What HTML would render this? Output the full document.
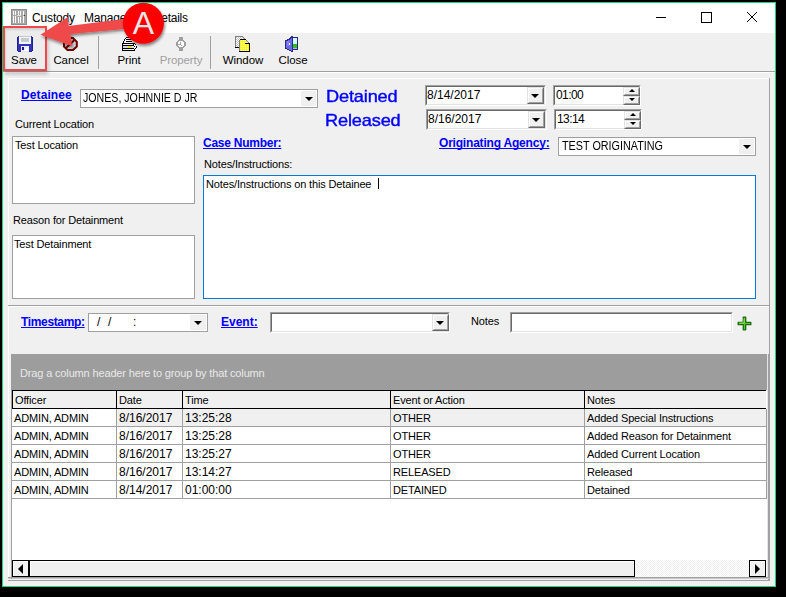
<!DOCTYPE html>
<html><head><meta charset="utf-8">
<style>
*{box-sizing:border-box;margin:0;padding:0}
html,body{width:786px;height:597px;overflow:hidden;background:#000}
body{position:relative;font-family:"Liberation Sans",sans-serif;font-size:11px;color:#000}
.a{position:absolute}
.t{position:absolute;white-space:pre;line-height:1;font-size:11px;letter-spacing:-0.15px}
.lnk{color:#0000ff;font-weight:bold;text-decoration:underline;text-decoration-skip-ink:none;letter-spacing:0}
.tb{font-size:11.5px;letter-spacing:-0.1px}
.box{position:absolute;background:#fff;border:1px solid #a0a0a0}
.sunk{position:absolute;background:#fff;border-top:1px solid #a0a0a0;border-left:1px solid #a0a0a0;border-right:1px solid #fff;border-bottom:1px solid #fff}
.sunk:before{content:"";position:absolute;left:0;top:0;right:0;bottom:0;border-top:1px solid #696969;border-left:1px solid #696969;border-right:1px solid #e3e3e3;border-bottom:1px solid #e3e3e3}
.btn3{position:absolute;background:#f0f0f0;border-top:1px solid #e3e3e3;border-left:1px solid #e3e3e3;border-right:1px solid #696969;border-bottom:1px solid #696969}
.btn3:before{content:"";position:absolute;left:0;top:0;right:0;bottom:0;border-top:1px solid #fff;border-left:1px solid #fff;border-right:1px solid #a0a0a0;border-bottom:1px solid #a0a0a0}
.tri{position:absolute;width:0;height:0;border-left:4px solid transparent;border-right:4px solid transparent;border-top:4px solid #000}
.triu{position:absolute;width:0;height:0;border-left:4px solid transparent;border-right:4px solid transparent;border-bottom:4px solid #000}
.tri.sm{border-left-width:3px;border-right-width:3px;border-top-width:3px}.triu.sm{border-left-width:3px;border-right-width:3px;border-bottom-width:3px}
.gl{position:absolute;background:#a0a0a0}
.wl{position:absolute;background:#fff}
.row{position:absolute;left:12px;width:755px;height:18px}
.cell{position:absolute;top:0;height:18px;border-right:1px solid #a0a0a0;border-bottom:1px solid #a0a0a0;background:#fff}
.cell span{position:absolute;left:1px;top:4px;white-space:pre;line-height:1;letter-spacing:-0.15px}
</style></head><body>
<!-- window -->
<div class="a" style="left:2px;top:2px;width:774px;height:585px;background:#f0f0f0;border:1px solid #1ed37c"></div>
<div class="a" style="left:3px;top:3px;width:772px;height:30px;background:#fff"></div>

<!-- title icon -->
<svg class="a" style="left:11px;top:9px" width="16" height="16" viewBox="0 0 16 16" shape-rendering="crispEdges">
<rect x="0" y="0" width="16" height="16" fill="#8c8c8c"/>
<rect x="1" y="1" width="14" height="14" fill="#a8a8a8"/>
<g fill="#fff"><rect x="2" y="2" width="1" height="4"/><rect x="4" y="2" width="1" height="4"/><rect x="7" y="2" width="1" height="4"/><rect x="9" y="2" width="1" height="4"/><rect x="12" y="2" width="1" height="4"/>
<rect x="2" y="7" width="1" height="7"/><rect x="4" y="7" width="1" height="7"/><rect x="7" y="8" width="1" height="6"/><rect x="9" y="8" width="1" height="6"/><rect x="12" y="7" width="1" height="7"/></g>
<rect x="6" y="6" width="4" height="1" fill="#e0e0e0"/>
<rect x="13" y="6" width="1" height="1" fill="#303030"/>
</svg>
<div class="t" style="left:32px;top:12px;font-size:12px;color:#000">Custody</div><div class="t" style="left:84px;top:12px;font-size:12px;letter-spacing:-0.2px;color:#000">Management</div><div class="t" style="left:153px;top:12px;font-size:12px;letter-spacing:-0.3px;color:#000">Details</div>

<!-- title buttons -->
<div class="a" style="left:656px;top:17px;width:10px;height:1px;background:#000"></div>
<div class="a" style="left:701px;top:12px;width:11px;height:11px;border:1px solid #000"></div>
<svg class="a" style="left:746px;top:11px" width="12" height="12" viewBox="0 0 12 12"><path d="M1 1L11 11M11 1L1 11" stroke="#000" stroke-width="1"/></svg>

<!-- toolbar -->
<div class="gl" style="left:3px;top:71px;width:772px;height:1px"></div>
<div class="wl" style="left:3px;top:72px;width:772px;height:1px"></div>
<div class="gl" style="left:98px;top:36px;width:1px;height:33px"></div>
<div class="gl" style="left:210px;top:36px;width:1px;height:33px"></div>

<!-- save pressed button -->
<div class="a" style="left:5px;top:28px;width:40px;height:41px;background:#ececec;box-shadow:inset 1px 2px 2px #d0d0d0"></div>
<svg class="a" style="left:17px;top:36px" width="16" height="16" viewBox="0 0 16 16" shape-rendering="crispEdges">
<path d="M1 0H15V1H16V15H15V16H1V15H0V1H1Z" fill="#3434b8"/>
<rect x="0" y="1" width="1" height="14" fill="#20209a"/><rect x="15" y="1" width="1" height="14" fill="#20209a"/><rect x="1" y="15" width="14" height="1" fill="#20209a"/>
<rect x="2" y="0" width="12" height="8" fill="#f4f4ff"/>
<rect x="2" y="0" width="12" height="1" fill="#c8c8d8"/>
<rect x="4" y="2" width="8" height="4" fill="#c4cccc"/>
<rect x="4" y="10" width="8" height="6" fill="#e8e8f0"/>
<rect x="5" y="11" width="2" height="3" fill="#1a1a90"/>
<path d="M7 15L10 11H11V15Z" fill="#ffffff"/>
</svg>
<div class="t tb" style="left:0px;width:48px;text-align:center;top:55px">Save</div>

<svg class="a" style="left:63px;top:37px" width="15" height="14" viewBox="0 0 15 14">
<path d="M4.5 1H10L13.8 4.8V9.5L10 13H4.5L1 9.5V4.8Z" fill="#d4d4d4" stroke="#6e0000" stroke-width="2" stroke-linejoin="miter"/>
<path d="M3 11L12 2.5" stroke="#6e0000" stroke-width="2"/>
</svg>
<div class="t tb" style="left:46px;width:50px;text-align:center;top:55px">Cancel</div>

<svg class="a" style="left:121px;top:37px" width="16" height="15" viewBox="0 0 16 15" shape-rendering="crispEdges">
<path d="M5 0H8V1H5Z" fill="#000"/>
<path d="M4 1H5V2H4ZM3 2H4V4H3ZM2 4H3V6H2Z" fill="#000"/>
<rect x="5" y="1" width="5" height="1" fill="#fff"/>
<rect x="4" y="2" width="7" height="4" fill="#fff"/>
<rect x="5" y="2" width="5" height="1" fill="#000"/>
<rect x="5" y="4" width="6" height="1" fill="#000"/>
<rect x="1" y="6" width="13" height="1" fill="#000"/>
<rect x="1" y="7" width="1" height="7" fill="#000"/>
<rect x="2" y="7" width="10" height="1" fill="#f0f0f0"/>
<rect x="2" y="8" width="11" height="1" fill="#000"/>
<rect x="2" y="9" width="11" height="2" fill="#d8d8e0"/>
<rect x="7" y="9" width="3" height="2" fill="#e8e800"/>
<rect x="2" y="11" width="11" height="1" fill="#000"/>
<rect x="3" y="12" width="9" height="1" fill="#f0f0f0"/>
<rect x="2" y="13" width="11" height="1" fill="#000"/>
<path d="M12 7H13V8H12ZM14 7H15V8H14ZM13 9H14V10H13ZM15 9H16V11H15ZM12 11H13V12H12ZM14 11H15V12H14ZM13 12H14V14H13Z" fill="#000"/>
</svg>
<div class="t tb" style="left:104px;width:50px;text-align:center;top:55px">Print</div>

<svg class="a" style="left:176px;top:37px" width="11" height="14" viewBox="0 0 11 14" shape-rendering="crispEdges">
<rect x="3" y="0" width="4" height="3" fill="#a0a0a0"/>
<rect x="3" y="11" width="4" height="3" fill="#a0a0a0"/>
<path d="M2 3H8V4H9V10H8V11H2V10H1V9H0V5H1V4H2Z" fill="#a0a0a0"/>
<rect x="9" y="5" width="1" height="4" fill="#a0a0a0"/>
<path d="M2 5H3V4H7V5H8V9H7V10H3V9H2Z" fill="#fff"/>
<rect x="4" y="5" width="1" height="3" fill="#a0a0a0"/><rect x="2" y="7" width="3" height="1" fill="#a0a0a0"/><rect x="5" y="8" width="1" height="1" fill="#a0a0a0"/>
</svg>
<div class="t tb" style="left:151px;width:60px;text-align:center;top:55px;color:#a0a0a0">Property</div>

<svg class="a" style="left:235px;top:36px" width="16" height="16" viewBox="0 0 16 16" shape-rendering="crispEdges">
<defs><pattern id="dg" width="2" height="2" patternUnits="userSpaceOnUse"><rect width="2" height="2" fill="#fff"/><rect width="1" height="1" fill="#c0c0c0"/><rect x="1" y="1" width="1" height="1" fill="#c0c0c0"/></pattern>
<pattern id="dy" width="2" height="2" patternUnits="userSpaceOnUse"><rect width="2" height="2" fill="#ffff00"/><rect width="1" height="1" fill="#fff"/></pattern></defs>
<path d="M0 0H7L10 3V12H0Z" fill="url(#dg)"/>
<rect x="0" y="0" width="1" height="11" fill="#808080"/><rect x="1" y="0" width="6" height="1" fill="#808080"/>
<rect x="0" y="11" width="5" height="1" fill="#000"/>
<path d="M7 1H8V2H9V3H10V4H11V5H12V6H13V7H14V6H13V5H12V4H11V3H10V2H9V1H8V0H7Z" fill="#808080"/>
<path d="M5 4H10L14 7V15H5Z" fill="url(#dy)"/>
<rect x="5" y="3" width="6" height="1" fill="#000"/>
<rect x="4" y="4" width="1" height="12" fill="#808080"/>
<rect x="10" y="7" width="5" height="1" fill="#000"/>
<rect x="14" y="7" width="1" height="9" fill="#000"/>
<rect x="4" y="15" width="11" height="1" fill="#000"/>
</svg>
<div class="t tb" style="left:213px;width:60px;text-align:center;top:55px">Window</div>

<svg class="a" style="left:285px;top:36px" width="14" height="16" viewBox="0 0 14 16" shape-rendering="crispEdges">
<rect x="6" y="1" width="7" height="13" fill="#282888"/>
<rect x="7" y="2" width="5" height="6" fill="#d0ffff"/>
<rect x="7" y="8" width="5" height="4" fill="#30c010"/>
<rect x="7" y="12" width="5" height="1" fill="#b0b0ff"/>
<path d="M0 4H2V3H4V2H5V1H6V0H8V16H6V15H4V14H2V13H0Z" fill="#2a2a88"/>
<path d="M1 5H3V4H5V3H6V2H7V15H6V14H4V13H2V12H1Z" fill="#6a6ae8"/>
<rect x="2" y="5" width="2" height="5" fill="#8080f8"/>
<rect x="4" y="7" width="1" height="2" fill="#ffffff"/>
</svg>
<div class="t tb" style="left:268px;width:50px;text-align:center;top:55px">Close</div>

<!-- upper panel -->
<div class="wl" style="left:8px;top:78px;width:762px;height:1px"></div>
<div class="wl" style="left:8px;top:78px;width:1px;height:227px"></div>
<div class="gl" style="left:769px;top:78px;width:1px;height:228px"></div>
<div class="gl" style="left:8px;top:305px;width:762px;height:1px"></div>

<div class="t lnk" style="left:21px;top:89px;font-size:12px;letter-spacing:0.1px">Detainee</div>
<div class="box" style="left:80px;top:89px;width:238px;height:19px"></div>
<div class="a" style="left:301px;top:91px;width:15px;height:15px;background:#f0f0f0"></div>
<div class="tri" style="left:305px;top:97px"></div>
<div class="t" style="left:83px;top:92px;font-size:12px;letter-spacing:0;transform:scaleX(0.885);transform-origin:0 0">JONES, JOHNNIE D JR</div>

<div class="t" style="left:326px;top:88px;font-size:17px;color:#0000ff;-webkit-text-stroke:0.4px #0000ff;transform:scaleX(1.07);transform-origin:0 0">Detained</div>
<div class="t" style="left:325px;top:112px;font-size:17px;color:#0000ff;-webkit-text-stroke:0.4px #0000ff;transform:scaleX(1.07);transform-origin:0 0">Released</div>

<div class="sunk" style="left:425px;top:85px;width:121px;height:21px"></div>
<div class="btn3" style="left:527px;top:87px;width:17px;height:17px"></div>
<div class="tri" style="left:531px;top:94px"></div>
<div class="t" style="left:427px;top:89px;font-size:12px;letter-spacing:0">8/14/2017</div>

<div class="sunk" style="left:426px;top:109px;width:121px;height:21px"></div>
<div class="btn3" style="left:528px;top:111px;width:17px;height:17px"></div>
<div class="tri" style="left:532px;top:118px"></div>
<div class="t" style="left:428px;top:113px;font-size:12px;letter-spacing:0">8/16/2017</div>

<div class="sunk" style="left:553px;top:85px;width:88px;height:21px"></div>
<div class="btn3" style="left:623px;top:87px;width:17px;height:9px"></div>
<div class="btn3" style="left:623px;top:96px;width:17px;height:9px"></div>
<div class="triu sm" style="left:628.5px;top:88.5px"></div>
<div class="tri sm" style="left:628.5px;top:98px"></div>
<div class="t" style="left:556px;top:89px;font-size:12px;letter-spacing:-0.6px">01:00</div>

<div class="sunk" style="left:554px;top:109px;width:88px;height:21px"></div>
<div class="btn3" style="left:624px;top:111px;width:17px;height:9px"></div>
<div class="btn3" style="left:624px;top:120px;width:17px;height:9px"></div>
<div class="triu sm" style="left:629.5px;top:112.5px"></div>
<div class="tri sm" style="left:629.5px;top:122px"></div>
<div class="t" style="left:557px;top:113px;font-size:12px;letter-spacing:-0.6px">13:14</div>

<div class="t" style="left:15px;top:119px">Current Location</div>
<div class="box" style="left:12px;top:136px;width:183px;height:68px"></div>
<div class="t" style="left:15px;top:140px">Test Location</div>

<div class="t" style="left:13px;top:215px">Reason for Detainment</div>
<div class="box" style="left:12px;top:235px;width:183px;height:64px"></div>
<div class="t" style="left:14px;top:239px">Test Detainment</div>

<div class="t lnk" style="left:203px;top:137px;font-size:12px;letter-spacing:-0.25px">Case Number:</div>
<div class="t" style="left:204px;top:159px">Notes/Instructions:</div>
<div class="a" style="left:203px;top:175px;width:553px;height:124px;background:#fff;border:1px solid #0078d7"></div>
<div class="t" style="left:206px;top:179px">Notes/Instructions on this Detainee </div>
<div class="a" style="left:378px;top:178px;width:1px;height:11px;background:#000"></div>

<div class="t lnk" style="left:439px;top:137px;font-size:12px;letter-spacing:-0.2px">Originating Agency:</div>
<div class="box" style="left:558px;top:137px;width:198px;height:19px"></div>
<div class="a" style="left:739px;top:139px;width:15px;height:15px;background:#f0f0f0"></div>
<div class="tri" style="left:743px;top:145px"></div>
<div class="t" style="left:562px;top:140px;font-size:12px;letter-spacing:0;transform:scaleX(0.9);transform-origin:0 0">TEST ORIGINATING</div>

<!-- lower panel -->
<div class="wl" style="left:8px;top:306px;width:762px;height:1px"></div>
<div class="wl" style="left:8px;top:306px;width:1px;height:275px"></div>
<div class="gl" style="left:769px;top:306px;width:1px;height:275px"></div>
<div class="gl" style="left:8px;top:580px;width:762px;height:1px"></div>

<div class="t lnk" style="left:21px;top:316px;font-size:12px;letter-spacing:-0.35px">Timestamp:</div>
<div class="box" style="left:88px;top:313px;width:120px;height:19px"></div>
<div class="a" style="left:190px;top:315px;width:16px;height:15px;background:#f0f0f0"></div>
<div class="tri" style="left:194px;top:321px"></div>
<div class="t" style="left:97px;top:316px;font-size:12px">/</div><div class="t" style="left:108px;top:316px;font-size:12px">/</div><div class="t" style="left:133px;top:316px;font-size:12px">:</div>

<div class="t lnk" style="left:221px;top:316px;font-size:12px">Event:</div>
<div class="sunk" style="left:270px;top:312px;width:180px;height:21px"></div>
<div class="btn3" style="left:432px;top:314px;width:17px;height:17px"></div>
<div class="tri" style="left:436px;top:321px"></div>

<div class="t" style="left:471px;top:316px">Notes</div>
<div class="sunk" style="left:510px;top:312px;width:223px;height:21px"></div>
<svg class="a" style="left:737px;top:316px" width="16" height="16" viewBox="0 0 16 16">
<path d="M6.3 1.2H8.7V6.3H13.8V8.7H8.7V13.8H6.3V8.7H1.2V6.3H6.3Z" fill="#58c828" stroke="#1c6a10" stroke-width="1.3" stroke-linejoin="round"/>
<path d="M7 2.5V7H2.5" stroke="#a8f070" stroke-width="0.8" fill="none"/>
</svg>

<!-- grid -->
<div class="a" style="left:11px;top:354px;width:756px;height:223px;background:#fff"></div>
<div class="a" style="left:767px;top:354px;width:1px;height:224px;background:#e6e6e6"></div><div class="gl" style="left:768px;top:354px;width:1px;height:226px"></div>
<div class="gl" style="left:8px;top:577px;width:761px;height:1px"></div><div class="a" style="left:8px;top:578px;width:761px;height:1px;background:#c8c8c8"></div>
<div class="a" style="left:11px;top:354px;width:756px;height:36px;background:#9d9d9d"></div>
<div class="t" style="left:20px;top:368px;color:#e8e8e8">Drag a column header here to group by that column</div>

<!-- header -->
<div class="a" style="left:12px;top:390px;width:754px;height:19px;background:#f0f0f0;border-top:1px solid #000;border-bottom:1px solid #000;border-left:1px solid #000"></div>
<div class="a" style="left:116px;top:390px;width:1px;height:19px;background:#000"></div>
<div class="a" style="left:182px;top:390px;width:1px;height:19px;background:#000"></div>
<div class="a" style="left:390px;top:390px;width:1px;height:19px;background:#000"></div>
<div class="a" style="left:584px;top:390px;width:1px;height:19px;background:#000"></div>

<div class="t" style="left:15px;top:395px">Officer</div>
<div class="t" style="left:119px;top:395px">Date</div>
<div class="t" style="left:185px;top:395px">Time</div>
<div class="t" style="left:393px;top:395px">Event or Action</div>
<div class="t" style="left:587px;top:395px">Notes</div>

<div class="gl" style="left:11px;top:390px;width:1px;height:189px"></div>
<div class="cell" style="left:12px;top:409px;width:105px;background:#fff"><span style="left:2px">ADMIN, ADMIN</span></div>
<div class="cell" style="left:117px;top:409px;width:66px;background:#f0f0f0"><span style="left:2px;font-size:12px;top:3px;letter-spacing:0">8/16/2017</span></div>
<div class="cell" style="left:183px;top:409px;width:208px;background:#f0f0f0"><span style="left:2px;font-size:12px;top:3px;letter-spacing:0">13:25:28</span></div>
<div class="cell" style="left:391px;top:409px;width:194px;background:#f0f0f0"><span style="left:2px">OTHER</span></div>
<div class="cell" style="left:585px;top:409px;width:182px;background:#f0f0f0"><span style="left:2px">Added Special Instructions</span></div>
<div class="cell" style="left:12px;top:427px;width:105px;background:#fff"><span style="left:2px">ADMIN, ADMIN</span></div>
<div class="cell" style="left:117px;top:427px;width:66px;background:#fff"><span style="left:2px;font-size:12px;top:3px;letter-spacing:0">8/16/2017</span></div>
<div class="cell" style="left:183px;top:427px;width:208px;background:#fff"><span style="left:2px;font-size:12px;top:3px;letter-spacing:0">13:25:28</span></div>
<div class="cell" style="left:391px;top:427px;width:194px;background:#fff"><span style="left:2px">OTHER</span></div>
<div class="cell" style="left:585px;top:427px;width:182px;background:#fff"><span style="left:2px">Added Reason for Detainment</span></div>
<div class="cell" style="left:12px;top:445px;width:105px;background:#fff"><span style="left:2px">ADMIN, ADMIN</span></div>
<div class="cell" style="left:117px;top:445px;width:66px;background:#fff"><span style="left:2px;font-size:12px;top:3px;letter-spacing:0">8/16/2017</span></div>
<div class="cell" style="left:183px;top:445px;width:208px;background:#fff"><span style="left:2px;font-size:12px;top:3px;letter-spacing:0">13:25:27</span></div>
<div class="cell" style="left:391px;top:445px;width:194px;background:#fff"><span style="left:2px">OTHER</span></div>
<div class="cell" style="left:585px;top:445px;width:182px;background:#fff"><span style="left:2px">Added Current Location</span></div>
<div class="cell" style="left:12px;top:463px;width:105px;background:#fff"><span style="left:2px">ADMIN, ADMIN</span></div>
<div class="cell" style="left:117px;top:463px;width:66px;background:#fff"><span style="left:2px;font-size:12px;top:3px;letter-spacing:0">8/16/2017</span></div>
<div class="cell" style="left:183px;top:463px;width:208px;background:#fff"><span style="left:2px;font-size:12px;top:3px;letter-spacing:0">13:14:27</span></div>
<div class="cell" style="left:391px;top:463px;width:194px;background:#fff"><span style="left:2px">RELEASED</span></div>
<div class="cell" style="left:585px;top:463px;width:182px;background:#fff"><span style="left:2px">Released</span></div>
<div class="cell" style="left:12px;top:481px;width:105px;background:#fff"><span style="left:2px">ADMIN, ADMIN</span></div>
<div class="cell" style="left:117px;top:481px;width:66px;background:#fff"><span style="left:2px;font-size:12px;top:3px;letter-spacing:0">8/14/2017</span></div>
<div class="cell" style="left:183px;top:481px;width:208px;background:#fff"><span style="left:2px;font-size:12px;top:3px;letter-spacing:0">01:00:00</span></div>
<div class="cell" style="left:391px;top:481px;width:194px;background:#fff"><span style="left:2px">DETAINED</span></div>
<div class="cell" style="left:585px;top:481px;width:182px;background:#fff"><span style="left:2px">Detained</span></div>

<!-- scrollbar -->
<div class="a" style="left:12px;top:560px;width:755px;height:17px;background:repeating-conic-gradient(#fff 0 25%,#f0f0f0 0 50%) 0 0/2px 2px"></div>
<div class="a" style="left:12px;top:560px;width:17px;height:17px;background:#f0f0f0;border:1px solid #000;box-shadow:inset 1px 1px #fff"></div>
<div class="a" style="left:18px;top:563.5px;width:0;height:0;border-top:5px solid transparent;border-bottom:5px solid transparent;border-right:5.5px solid #000"></div>
<div class="a" style="left:29px;top:560px;width:606px;height:17px;background:#f0f0f0;border:1px solid #000;box-shadow:inset 1px 1px #fff"></div>
<div class="a" style="left:749px;top:560px;width:17px;height:17px;background:#f0f0f0;border:1px solid #000;box-shadow:inset 1px 1px #fff"></div>
<div class="a" style="left:755px;top:563.5px;width:0;height:0;border-top:5px solid transparent;border-bottom:5px solid transparent;border-left:5.5px solid #000"></div>

<!-- annotation -->
<div class="a" style="left:3px;top:26px;width:44px;height:45px;border:2px solid #f04848;box-shadow:1px 3px 4px rgba(0,0,0,0.22)"></div>
<svg class="a" style="left:0;top:0" width="786" height="80" viewBox="0 0 786 80">
<defs><filter id="sh" x="-20%" y="-50%" width="140%" height="200%"><feGaussianBlur in="SourceAlpha" stdDeviation="1.5"/><feOffset dx="1" dy="2"/><feComponentTransfer><feFuncA type="linear" slope="0.5"/></feComponentTransfer><feMerge><feMergeNode/><feMergeNode in="SourceGraphic"/></feMerge></filter></defs>
<path d="M40.5 34.8L68 17L68.5 26L124 19L125 29L70.5 34L72 46Z" fill="#f04848" filter="url(#sh)"/>
<circle cx="143.4" cy="23.3" r="20.5" fill="#fb0000" filter="url(#sh)"/>
<text x="143.5" y="33.9" text-anchor="middle" font-family="Liberation Sans" font-size="32" fill="#e6e6e6">A</text>
</svg>
</body></html>
